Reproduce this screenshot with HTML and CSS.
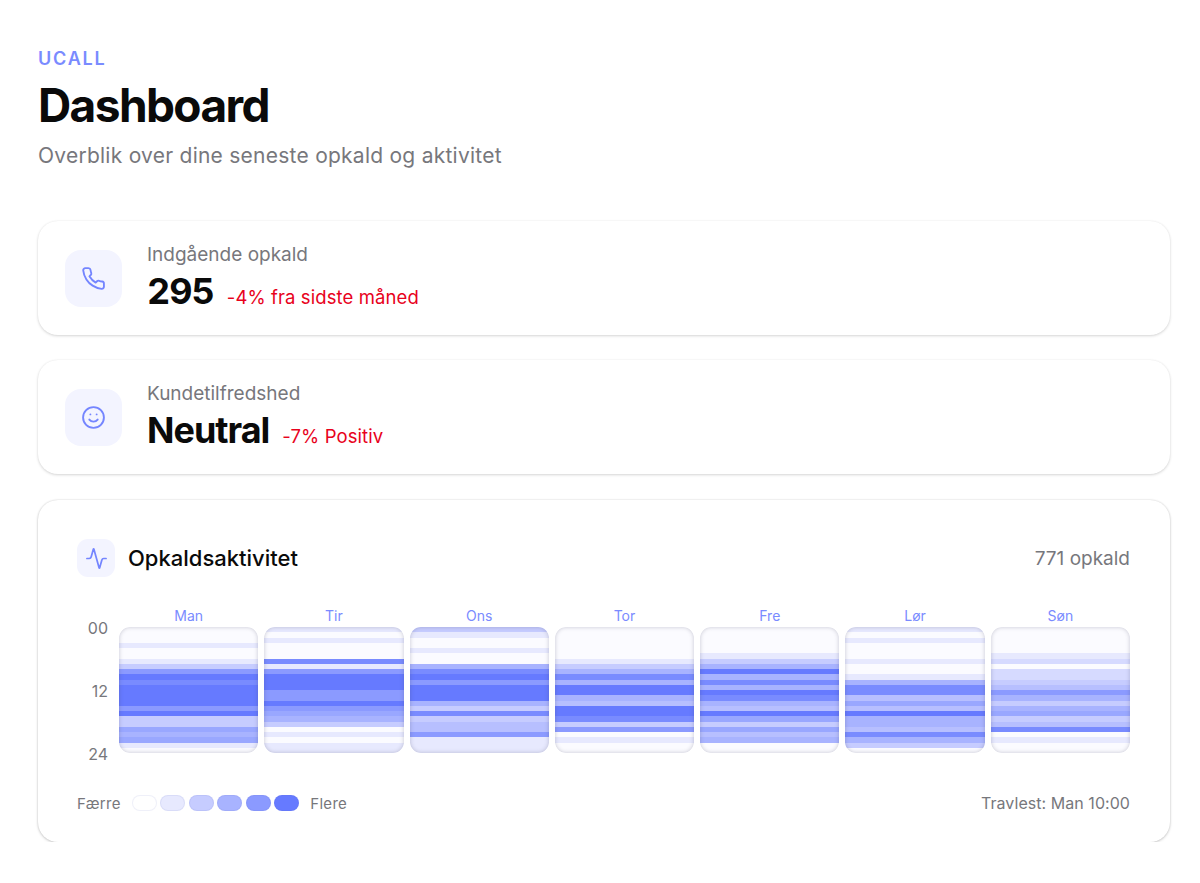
FILE: index.html
```html
<!DOCTYPE html>
<html lang="da">
<head>
  <meta charset="UTF-8">
  <title>Dashboard</title>
  <link rel="stylesheet" href="styles.css">
</head>
<body>
  <header class="page-head">
    <div class="brand">UCALL</div>
    <h1>Dashboard</h1>
    <p class="lead">Overblik over dine seneste opkald og aktivitet</p>
  </header>

  <section class="stat-card">
    <div class="stat-icon">
      <svg viewBox="0 0 24 24" width="25" height="25"><path d="M22 16.92v3a2 2 0 0 1-2.18 2 19.79 19.79 0 0 1-8.63-3.07 19.5 19.5 0 0 1-6-6 19.79 19.79 0 0 1-3.07-8.67A2 2 0 0 1 4.11 2h3a2 2 0 0 1 2 1.72 12.84 12.84 0 0 0 .7 2.81 2 2 0 0 1-.45 2.11L8.09 9.91a16 16 0 0 0 6 6l1.27-1.27a2 2 0 0 1 2.11-.45 12.84 12.84 0 0 0 2.81.7A2 2 0 0 1 22 16.92z"/></svg>
    </div>
    <div>
      <div class="stat-label">Indgående opkald</div>
      <div class="stat-line"><span class="stat-value">295</span><span class="stat-change">-4% fra sidste måned</span></div>
    </div>
  </section>

  <section class="stat-card">
    <div class="stat-icon">
      <svg viewBox="0 0 24 24" width="25" height="25"><circle cx="12" cy="12" r="10"/><path d="M8 14s1.5 2 4 2 4-2 4-2"/><path d="M9 9h.01"/><path d="M15 9h.01"/></svg>
    </div>
    <div>
      <div class="stat-label">Kundetilfredshed</div>
      <div class="stat-line"><span class="stat-value">Neutral</span><span class="stat-change">-7% Positiv</span></div>
    </div>
  </section>

  <section class="activity-card">
    <div class="activity-head">
      <div class="activity-title">
        <div class="activity-icon">
          <svg viewBox="0 0 24 24" width="23" height="23"><path d="M22 12h-2.48a2 2 0 0 0-1.93 1.46l-2.35 8.36a.25.25 0 0 1-.48 0L9.24 2.18a.25.25 0 0 0-.48 0l-2.35 8.36A2 2 0 0 1 4.49 12H2"/></svg>
        </div>
        <h2>Opkaldsaktivitet</h2>
      </div>
      <span class="activity-count">771 opkald</span>
    </div>

    <div class="heatmap">
      <div class="hours"><span>00</span><span>12</span><span>24</span></div>

      <div class="day">
        <div class="day-name">Man</div>
        <div class="strip">
          <i class="l0"></i><i class="l0"></i><i class="l0"></i><i class="l1"></i><i class="l0"></i><i class="l0"></i>
          <i class="l1"></i><i class="l2"></i><i class="l4"></i><i class="l5"></i><i class="l45"></i><i class="l5"></i>
          <i class="l5"></i><i class="l5"></i><i class="l5"></i><i class="l4"></i><i class="l5"></i><i class="l2"></i>
          <i class="l2"></i><i class="l35"></i><i class="l3"></i><i class="l35"></i><i class="l1"></i><i class="l0"></i>
        </div>
      </div>

      <div class="day">
        <div class="day-name">Tir</div>
        <div class="strip">
          <i class="l1"></i><i class="l0"></i><i class="l1"></i><i class="l0"></i><i class="l0"></i><i class="l0"></i>
          <i class="l45"></i><i class="l1"></i><i class="l4"></i><i class="l5"></i><i class="l5"></i><i class="l5"></i>
          <i class="l4"></i><i class="l4"></i><i class="l5"></i><i class="l4"></i><i class="l35"></i><i class="l3"></i>
          <i class="l2"></i><i class="l0"></i><i class="l1"></i><i class="l0"></i><i class="l1"></i><i class="l1"></i>
        </div>
      </div>

      <div class="day">
        <div class="day-name">Ons</div>
        <div class="strip">
          <i class="l2"></i><i class="l1"></i><i class="l0"></i><i class="l0"></i><i class="l1"></i><i class="l0"></i>
          <i class="l0"></i><i class="l3"></i><i class="l45"></i><i class="l5"></i><i class="l4"></i><i class="l5"></i>
          <i class="l5"></i><i class="l5"></i><i class="l3"></i><i class="l2"></i><i class="l45"></i><i class="l2"></i>
          <i class="l25"></i><i class="l25"></i><i class="l4"></i><i class="l1"></i><i class="l1"></i><i class="l1"></i>
        </div>
      </div>

      <div class="day">
        <div class="day-name">Tor</div>
        <div class="strip">
          <i class="l0"></i><i class="l0"></i><i class="l0"></i><i class="l0"></i><i class="l0"></i><i class="l0"></i>
          <i class="l1"></i><i class="l2"></i><i class="l3"></i><i class="l45"></i><i class="l3"></i><i class="l5"></i>
          <i class="l5"></i><i class="l3"></i><i class="l25"></i><i class="l5"></i><i class="l5"></i><i class="l45"></i>
          <i class="l2"></i><i class="l4"></i><i class="l0"></i><i class="l1"></i><i class="l0"></i><i class="l0"></i>
        </div>
      </div>

      <div class="day">
        <div class="day-name">Fre</div>
        <div class="strip">
          <i class="l0"></i><i class="l0"></i><i class="l0"></i><i class="l0"></i><i class="l0"></i><i class="l1"></i>
          <i class="l2"></i><i class="l3"></i><i class="l5"></i><i class="l3"></i><i class="l45"></i><i class="l3"></i>
          <i class="l5"></i><i class="l45"></i><i class="l3"></i><i class="l25"></i><i class="l5"></i><i class="l35"></i>
          <i class="l2"></i><i class="l35"></i><i class="l25"></i><i class="l3"></i><i class="l0"></i><i class="l0"></i>
        </div>
      </div>

      <div class="day">
        <div class="day-name">Lør</div>
        <div class="strip">
          <i class="l1"></i><i class="l0"></i><i class="l1"></i><i class="l0"></i><i class="l0"></i><i class="l0"></i>
          <i class="l1"></i><i class="l0"></i><i class="l0"></i><i class="l1"></i><i class="l3"></i><i class="l45"></i>
          <i class="l45"></i><i class="l25"></i><i class="l35"></i><i class="l25"></i><i class="l5"></i><i class="l3"></i>
          <i class="l3"></i><i class="l25"></i><i class="l45"></i><i class="l3"></i><i class="l2"></i><i class="l0"></i>
        </div>
      </div>

      <div class="day">
        <div class="day-name">Søn</div>
        <div class="strip">
          <i class="l0"></i><i class="l0"></i><i class="l0"></i><i class="l0"></i><i class="l0"></i><i class="l1"></i>
          <i class="l15"></i><i class="l0"></i><i class="l15"></i><i class="l15"></i><i class="l2"></i><i class="l25"></i>
          <i class="l4"></i><i class="l3"></i><i class="l2"></i><i class="l3"></i><i class="l35"></i><i class="l2"></i>
          <i class="l25"></i><i class="l45"></i><i class="l0"></i><i class="l1"></i><i class="l0"></i><i class="l0"></i>
        </div>
      </div>
    </div>

    <div class="activity-foot">
      <div class="legend">
        <span>Færre</span>
        <div class="swatches">
          <i class="l0"></i><i class="l1"></i><i class="l2"></i><i class="l3"></i><i class="l4"></i><i class="l5"></i>
        </div>
        <span>Flere</span>
      </div>
      <span class="busiest">Travlest: Man 10:00</span>
    </div>
  </section>
</body>
</html>
```

FILE: styles.css
```css
body {
  margin: 0;
  padding: 49px 30px 0 38px;
  background: #fff;
  color: #0a0a0a;
  font-family: 'Inter', 'Liberation Sans', sans-serif;
}

svg {
  fill: none;
  stroke: #7485ff;
  stroke-width: 1.8;
  stroke-linecap: round;
  stroke-linejoin: round;
}

.page-head {
  margin-bottom: 51px;
}

.brand {
  font-size: 18px;
  line-height: 20px;
  font-weight: 600;
  letter-spacing: 1.8px;
  color: #7a8bff;
}

h1 {
  margin: 8px 0 0;
  font-size: 46px;
  line-height: 56px;
  font-weight: 700;
  letter-spacing: -1.6px;
}

.lead {
  margin: 9px 0 0;
  font-size: 21px;
  line-height: 28px;
  letter-spacing: 0.25px;
  color: #77777c;
}

.stat-card {
  display: flex;
  align-items: center;
  gap: 25px;
  height: 114px;
  margin-bottom: 25px;
  padding: 0 27px;
  background: #fff;
  border-radius: 20px;
  box-shadow: 0 1px 3px rgba(0, 0, 0, 0.16), 0 0 2px rgba(0, 0, 0, 0.05);
}

.stat-icon {
  display: flex;
  align-items: center;
  justify-content: center;
  width: 57px;
  height: 57px;
  border-radius: 16px;
  background: #f3f4ff;
}

.stat-label {
  font-size: 19px;
  line-height: 24px;
  color: #77777c;
}

.stat-line {
  display: flex;
  align-items: baseline;
  gap: 13px;
  margin-top: 2px;
}

.stat-value {
  font-size: 36px;
  line-height: 44px;
  font-weight: 700;
  letter-spacing: -1px;
  font-variant-numeric: tabular-nums;
}

.stat-change {
  font-size: 18.5px;
  letter-spacing: 0.1px;
  color: #e8021c;
}

.activity-card {
  margin-top: 26px;
  padding: 39px 40px 0 39px;
  height: 342px;
  box-sizing: border-box;
  background: #fff;
  border-radius: 20px;
  box-shadow: 0 1px 3px rgba(0, 0, 0, 0.18), 0 0 2px rgba(0, 0, 0, 0.14);
}

.activity-head {
  display: flex;
  align-items: center;
  justify-content: space-between;
}

.activity-title {
  display: flex;
  align-items: center;
  gap: 13px;
}

.activity-icon {
  display: flex;
  align-items: center;
  justify-content: center;
  width: 38px;
  height: 38px;
  border-radius: 11px;
  background: #f3f4ff;
}

h2 {
  margin: 0;
  font-size: 22px;
  font-weight: 500;
}

.activity-count {
  font-size: 19px;
  color: #77777c;
}

.heatmap {
  display: flex;
  gap: 6px;
  margin-top: 30px;
}

.hours {
  display: flex;
  flex-direction: column;
  justify-content: space-between;
  align-items: flex-end;
  width: 31px;
  margin: 12px 5px -10px 0;
  font-size: 16px;
  line-height: 18px;
  color: #77777c;
}

.day {
  flex: 1;
}

.day-name {
  margin-bottom: 2px;
  font-size: 14px;
  line-height: 18px;
  text-align: center;
  color: #7a8bff;
}

.strip {
  position: relative;
  display: grid;
  grid-template-rows: repeat(24, 1fr);
  height: 126px;
  overflow: hidden;
  border-radius: 11px;
}

/* soft grey edge on top of the hour rows */
.strip::after {
  content: '';
  position: absolute;
  inset: 0;
  border-radius: 11px;
  box-shadow: inset 0 0 4px rgba(60, 60, 90, 0.28);
}

.l0 { background: #fbfbff; }
.l1 { background: #e7e9fe; }
.l15 { background: #d6daff; }
.l2 { background: #c6ccff; }
.l25 { background: #b7bfff; }
.l3 { background: #a8b3ff; }
.l35 { background: #99a7ff; }
.l4 { background: #8b9aff; }
.l45 { background: #798bff; }
.l5 { background: #667aff; }

.activity-foot {
  display: flex;
  align-items: center;
  justify-content: space-between;
  margin-top: 40px;
  font-size: 15px;
  letter-spacing: 0.3px;
  color: #77777c;
}

.busiest {
  font-size: 16px;
  letter-spacing: 0.05px;
}

.legend {
  display: flex;
  align-items: center;
  gap: 11px;
}

.swatches {
  display: flex;
  gap: 3.5px;
}

.swatches i {
  width: 25px;
  height: 16px;
  box-sizing: border-box;
  border-radius: 8px;
  border: 1px solid rgba(100, 110, 200, 0.1);
}

.swatches .l0 {
  background: #fff;
}
```
